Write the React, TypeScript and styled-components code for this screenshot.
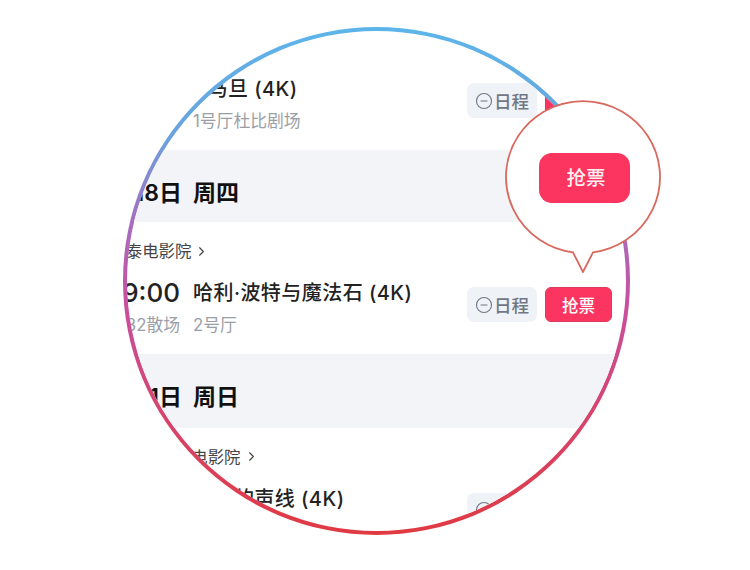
import { CircleMinus, ChevronRight } from "lucide-react";
import styled, { createGlobalStyle } from "styled-components";

const GlobalStyle = createGlobalStyle`
  html, body {
    margin: 0;
    background: #fff;
  }
  body {
    font-family: Inter, "Noto Sans CJK SC", sans-serif;
    color: #222;
  }
`;

const Page = styled.div`
  position: relative;
  width: 750px;
  height: 570px;
  padding: 27px 0 0 123px;
  box-sizing: border-box;
  overflow: hidden;
`;

const Ring = styled.div`
  width: 507px;
  height: 508px;
  padding: 4px;
  box-sizing: border-box;
  border-radius: 50%;
  background: linear-gradient(
    to bottom,
    #5cb5ea 0%,
    #6aa2dd 22%,
    #a56fc0 38%,
    #c84f9f 55%,
    #d5456f 75%,
    #e03a42 100%
  );
`;

const Lens = styled.div`
  width: 100%;
  height: 100%;
  border-radius: 50%;
  background: #fff;
  overflow: hidden;
`;

const List = styled.div`
  width: 546px;
  margin-left: -45px;
  padding-top: 42px;
`;

const Band = styled.div<{ $height: number }>`
  display: grid;
  grid-template-columns: 100px 1fr;
  column-gap: 11px;
  align-items: center;
  box-sizing: border-box;
  height: ${(p) => p.$height}px;
  padding-top: 13px;
  background: #f2f4f7;
  font-size: 23px;
  line-height: 30px;
  font-weight: 600;
  color: #111;
`;

const BandDate = styled.span`
  text-align: right;
  white-space: nowrap;
`;

const Cinema = styled.div`
  display: flex;
  align-items: center;
  gap: 3px;
  margin: 16px 0 13px;
  padding-left: 11px;
  font-size: 16.4px;
  line-height: 26px;
  color: #444;
  white-space: nowrap;
`;

const Row = styled.div`
  display: grid;
  grid-template-columns: 98px 1fr auto;
  column-gap: 13px;
  padding: 0 16px 15px 0;
`;

const Time = styled.div`
  margin-top: 2px;
  font-size: 26px;
  line-height: 28px;
  font-weight: 500;
  text-align: right;
`;

const Title = styled.div<{ $shift?: number }>`
  margin-top: 2px;
  margin-left: ${(p) => p.$shift ?? 0}px;
  font-size: 20px;
  line-height: 28px;
  font-weight: 500;
  letter-spacing: 0.45px;
  white-space: nowrap;
`;

const Sub = styled.div<{ $end?: boolean }>`
  margin-top: 4px;
  font-size: 16.8px;
  line-height: 28px;
  color: #9a9ea6;
  white-space: nowrap;
  text-align: ${(p) => (p.$end ? "right" : "left")};
`;

const Actions = styled.div`
  grid-column: 3;
  grid-row: 1 / span 2;
  display: flex;
  gap: 8px;
  margin-top: 10px;
`;

const ScheduleChip = styled.div`
  display: flex;
  align-items: center;
  justify-content: center;
  gap: 1px;
  width: 70px;
  height: 35px;
  border-radius: 7px;
  background: #eff2f6;
  color: #6f7785;
  font-size: 17.5px;
  font-weight: 500;
`;

const GrabButton = styled.button<{ $large?: boolean }>`
  width: ${(p) => (p.$large ? "91px" : "67px")};
  height: ${(p) => (p.$large ? "50px" : "35px")};
  padding: ${(p) => (p.$large ? "0 0 4px 3px" : "0")};
  border: ${(p) => (p.$large ? "0" : "1px solid #dc3a5c")};
  border-radius: ${(p) => (p.$large ? "13px" : "6px")};
  background: #fb3560;
  color: ${(p) => (p.$large ? "#fff0f2" : "#fff")};
  font-family: inherit;
  font-size: ${(p) => (p.$large ? "19.5px" : "16.5px")};
  font-weight: 500;
`;

const Callout = styled.div`
  position: absolute;
  left: 505px;
  top: 99px;
  width: 156px;
  height: 174px;
`;

const CalloutShape = styled.svg`
  display: block;
`;

const CalloutAction = styled.div`
  position: absolute;
  left: 34px;
  top: 54px;
`;

function Actionbar() {
  return (
    <Actions>
      <ScheduleChip>
        <CircleMinus size={18} strokeWidth={1.5} />
        日程
      </ScheduleChip>
      <GrabButton>抢票</GrabButton>
    </Actions>
  );
}

export default function App() {
  return (
    <Page>
      <GlobalStyle />
      <Ring>
        <Lens>
          <List>
            <Row>
              <Time>14:30</Time>
              <Title $shift={-6}>罗马旦 (4K)</Title>
              <Sub $end>16:52散场</Sub>
              <Sub>1号厅杜比剧场</Sub>
              <Actionbar />
            </Row>
            <Band $height={72}>
              <BandDate>12月18日</BandDate>
              <span>周四</span>
            </Band>
            <Cinema>
              百丽泰电影院
              <ChevronRight size={15} strokeWidth={1.8} />
            </Cinema>
            <Row>
              <Time>19:00</Time>
              <Title>哈利·波特与魔法石 (4K)</Title>
              <Sub $end>21:32散场</Sub>
              <Sub>2号厅</Sub>
              <Actionbar />
            </Row>
            <Band $height={73.5}>
              <BandDate>12月21日</BandDate>
              <span>周日</span>
            </Band>
            <Cinema>
              中国华夏国际电影院
              <ChevronRight size={15} strokeWidth={1.8} />
            </Cinema>
            <Row>
              <Time>19:30</Time>
              <Title>寂静的声线 (4K)</Title>
              <Actionbar />
            </Row>
          </List>
        </Lens>
      </Ring>
      <Callout>
        <CalloutShape width="156" height="174" viewBox="0 0 156 174">
          <path
            d="M68 153.4 A77 76 0 1 1 88 153.4 L78 173 Z"
            fill="#fff"
            stroke="#d8695f"
            strokeWidth="1.8"
            strokeLinejoin="miter"
          />
        </CalloutShape>
        <CalloutAction>
          <GrabButton $large>抢票</GrabButton>
        </CalloutAction>
      </Callout>
    </Page>
  );
}
